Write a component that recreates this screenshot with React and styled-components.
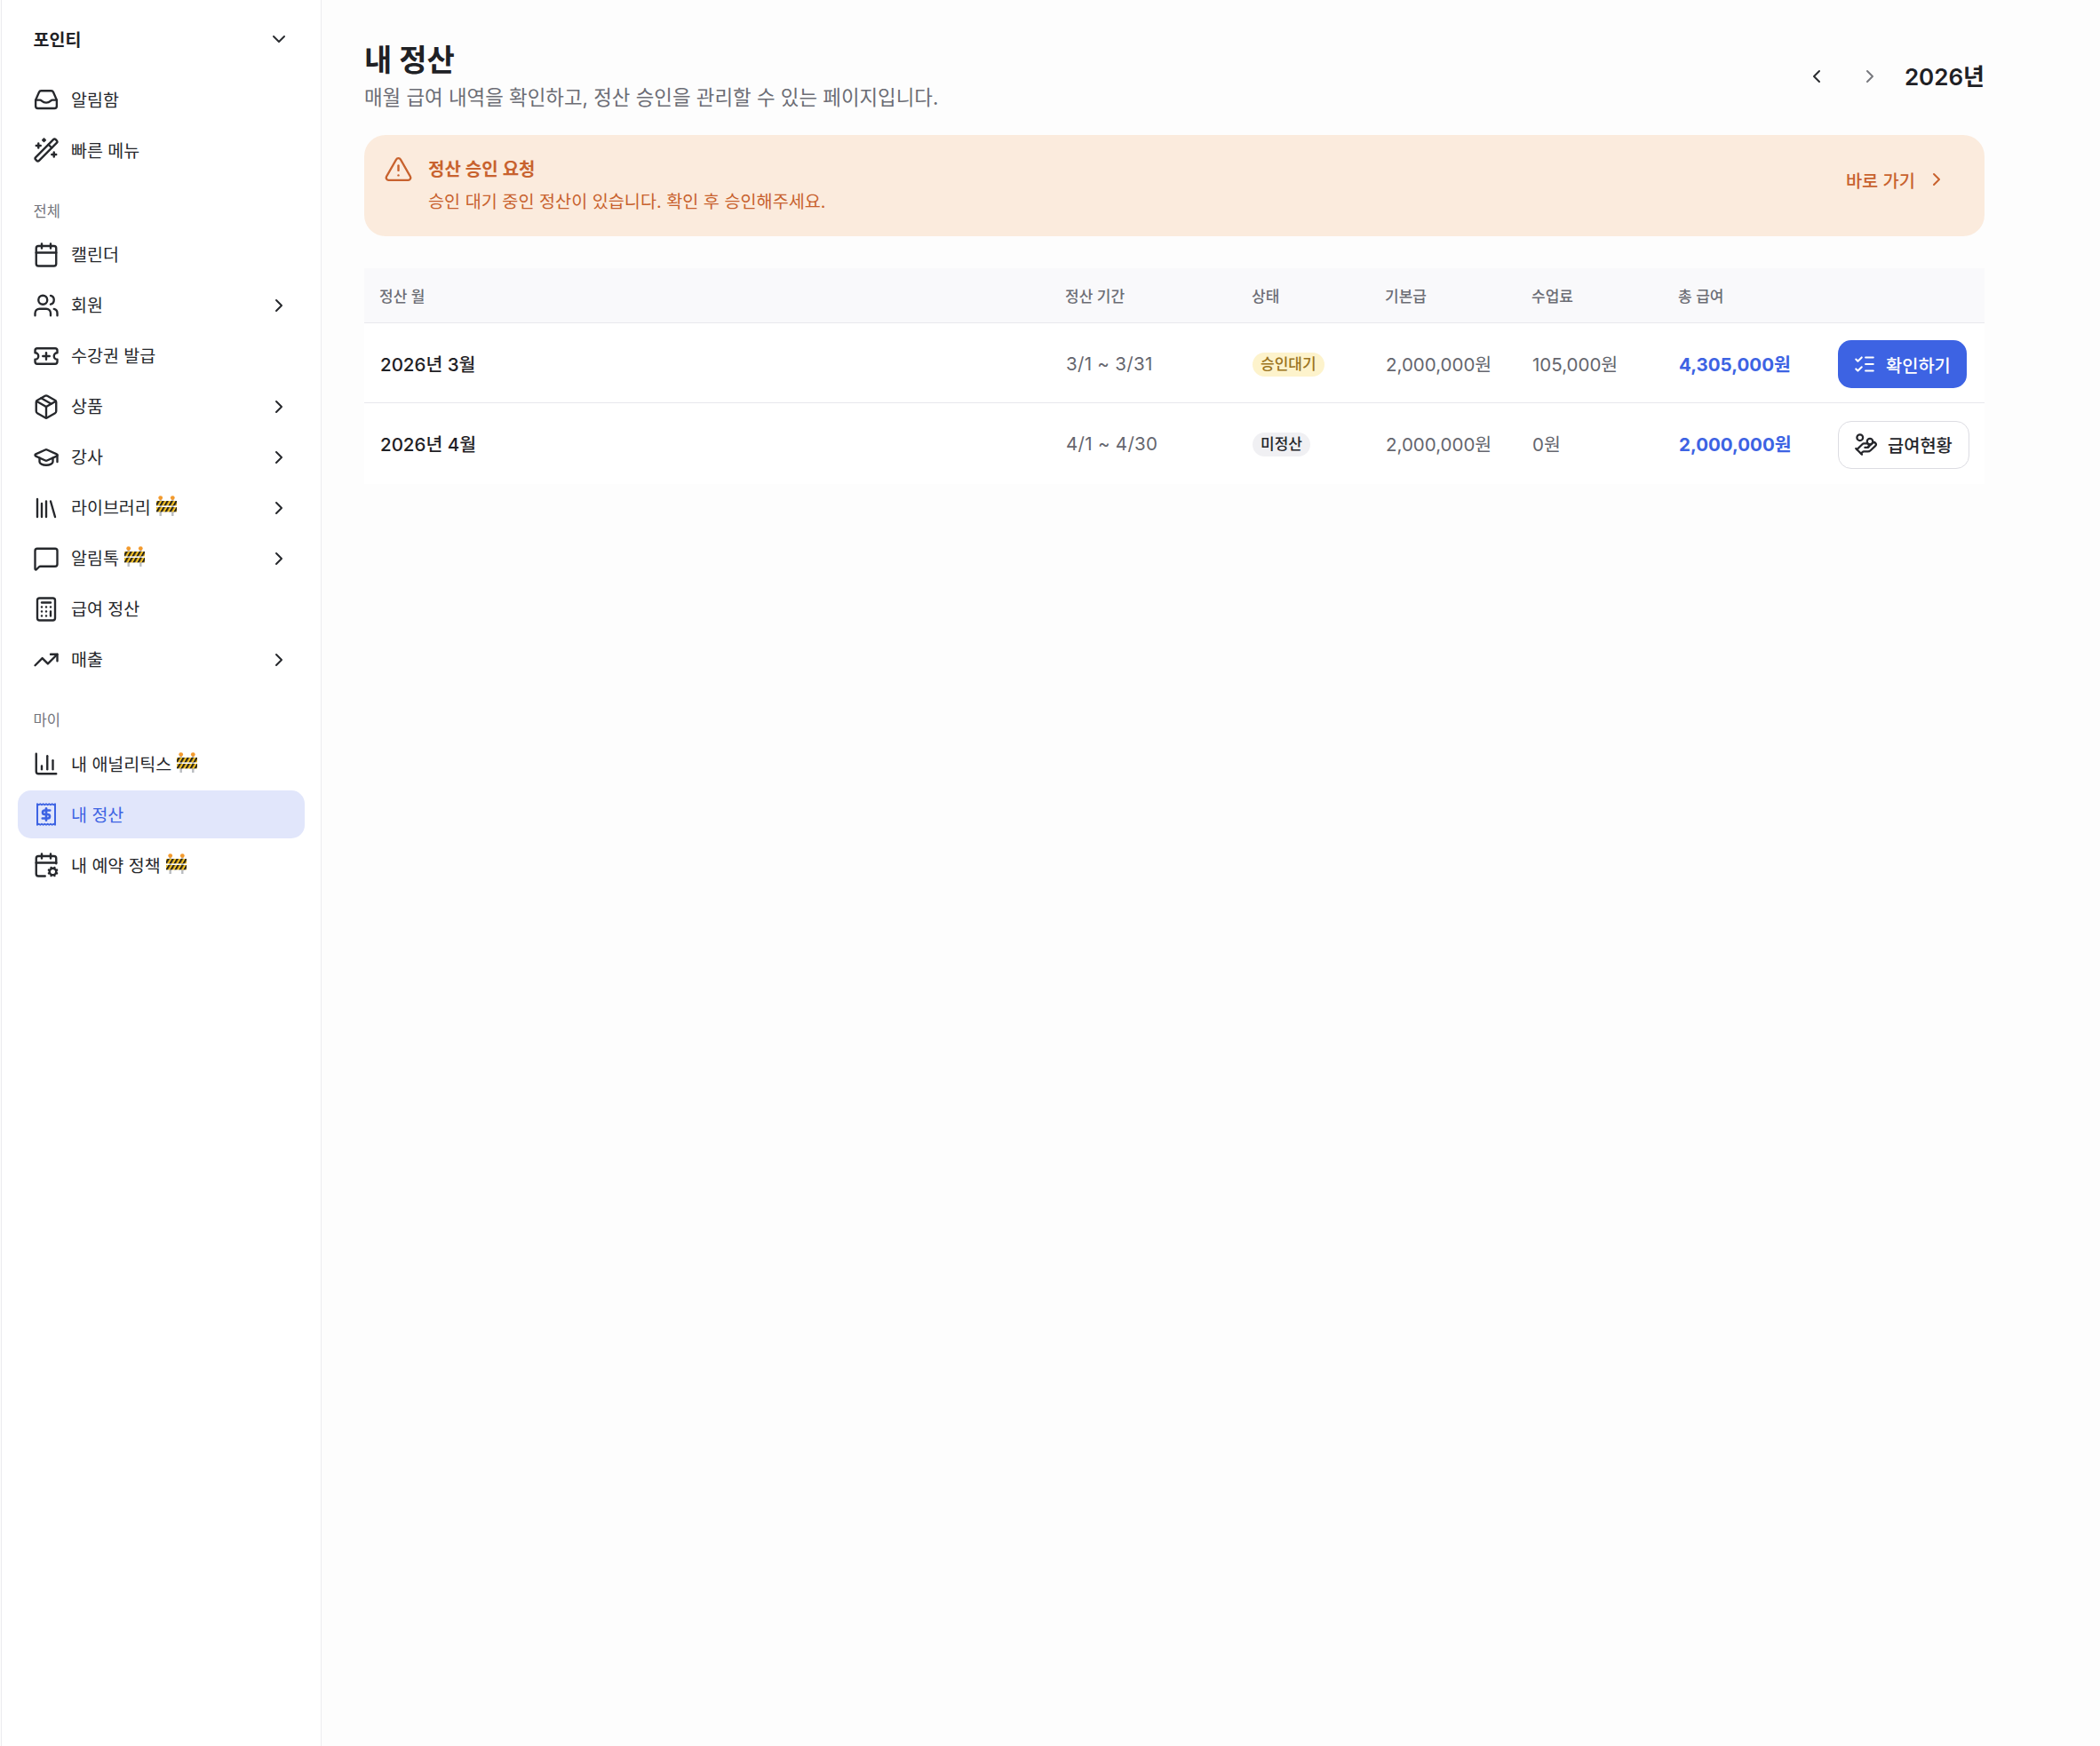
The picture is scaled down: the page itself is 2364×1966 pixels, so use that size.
import React from "react";
import styled, { createGlobalStyle } from "styled-components";
import {
  Calculator,
  Calendar,
  CalendarCog,
  ChartColumn,
  ChevronDown,
  ChevronLeft,
  ChevronRight,
  GraduationCap,
  HandCoins,
  Library,
  ListChecks,
  MessageSquare,
  Package,
  TicketPlus,
  TrendingUp,
  TriangleAlert,
  Users,
  WandSparkles,
} from "lucide-react";

const InboxIcon = (props) => (
  <svg width="30" height="30" viewBox="0 0 24 24" fill="none" stroke="currentColor" strokeWidth="1.9" strokeLinecap="round" strokeLinejoin="round" {...props}>
    <path d="M2.5 12.5 5.6 5.4A2 2 0 0 1 7.4 4.2h9.2a2 2 0 0 1 1.8 1.2l3.1 7.1V18a2 2 0 0 1-2 2h-15a2 2 0 0 1-2-2z" />
    <path d="M2.5 12.5h4c1.5 0 1.8 2.4 5.5 2.4s4-2.4 5.5-2.4h4" />
  </svg>
);

const ReceiptIcon = (props) => (
  <svg width="30" height="30" viewBox="0 0 24 24" fill="none" stroke="currentColor" strokeWidth="1.75" strokeLinejoin="round" {...props}>
    <path d="M4 2.6l1.33.8 1.33-.8 1.34.8 1.33-.8 1.34.8 1.33-.8 1.33.8 1.34-.8 1.33.8 1.33-.8 1.34.8 1.33-.8v18.8l-1.33-.8-1.33.8-1.34-.8-1.33.8-1.33-.8-1.34.8-1.33-.8-1.33.8-1.34-.8-1.33.8-1.33-.8-1.34.8z" strokeWidth="1.6" />
    <path d="M15.4 8.4H10.6a1.8 1.8 0 0 0 0 3.6h2.8a1.8 1.8 0 0 1 0 3.6H8.6" strokeWidth="2.1" strokeLinecap="round" />
    <path d="M12 6.6v10.8" strokeWidth="2.1" strokeLinecap="round" />
  </svg>
);

// 공사중 표지판
const Barrier = () => (
  <BarrierSvg viewBox="0 0 23 23">
    <defs>
      <pattern id="hazard" width="5" height="5" patternUnits="userSpaceOnUse" patternTransform="skewX(-30)">
        <rect width="5" height="5" fill="#f7c325" />
        <rect width="2.5" height="5" fill="#26231d" />
      </pattern>
    </defs>
    <rect x="3.5" y="3" width="2.4" height="20" fill="#b9bcc0" />
    <rect x="17.1" y="3" width="2.4" height="20" fill="#b9bcc0" />
    <circle cx="4.7" cy="2.6" r="2.4" fill="#f39a2d" />
    <circle cx="18.3" cy="2.6" r="2.4" fill="#f39a2d" />
    <rect x="0" y="6" width="23" height="5.4" fill="url(#hazard)" />
    <rect x="0" y="13" width="23" height="5.4" fill="url(#hazard)" />
  </BarrierSvg>
);

const topItems = [
  { label: "알림함", icon: InboxIcon },
  { label: "빠른 메뉴", icon: WandSparkles },
];

const allItems = [
  { label: "캘린더", icon: Calendar },
  { label: "회원", icon: Users, more: true },
  { label: "수강권 발급", icon: TicketPlus },
  { label: "상품", icon: Package, more: true },
  { label: "강사", icon: GraduationCap, more: true },
  { label: "라이브러리", icon: Library, more: true, wip: true },
  { label: "알림톡", icon: MessageSquare, more: true, wip: true },
  { label: "급여 정산", icon: Calculator },
  { label: "매출", icon: TrendingUp, more: true },
];

const myItems = [
  { label: "내 애널리틱스", icon: ChartColumn, wip: true },
  { label: "내 정산", icon: ReceiptIcon, active: true },
  { label: "내 예약 정책", icon: CalendarCog, wip: true },
];

const rows = [
  {
    month: "2026년 3월",
    period: "3/1 ~ 3/31",
    status: "승인대기",
    pending: true,
    base: "2,000,000원",
    fee: "105,000원",
    total: "4,305,000원",
  },
  {
    month: "2026년 4월",
    period: "4/1 ~ 4/30",
    status: "미정산",
    base: "2,000,000원",
    fee: "0원",
    total: "2,000,000원",
  },
];

const NavList = ({ items }) => (
  <Nav>
    {items.map(({ label, icon: Icon, more, wip, active }) => (
      <NavItem key={label} $active={active}>
        <Icon size={30} strokeWidth={1.9} />
        <NavLabel>
          {label}
          {wip && <Barrier />}
        </NavLabel>
        {more && <ChevronRight size={24} strokeWidth={2} />}
      </NavItem>
    ))}
  </Nav>
);

export default function App() {
  return (
    <Shell>
      <GlobalStyle />
      <Sidebar>
        <Brand>
          <BrandName>포인티</BrandName>
          <ChevronDown size={24} strokeWidth={2} />
        </Brand>
        <NavList items={topItems} />
        <SectionLabel>전체</SectionLabel>
        <NavList items={allItems} />
        <SectionLabel>마이</SectionLabel>
        <NavList items={myItems} />
      </Sidebar>
      <Main>
        <Header>
          <div>
            <Title>내 정산</Title>
            <Subtitle>매월 급여 내역을 확인하고, 정산 승인을 관리할 수 있는 페이지입니다.</Subtitle>
          </div>
          <YearPicker>
            <YearArrow>
              <ChevronLeft size={24} strokeWidth={2} />
            </YearArrow>
            <YearArrow $muted>
              <ChevronRight size={24} strokeWidth={2} />
            </YearArrow>
            <Year>2026년</Year>
          </YearPicker>
        </Header>

        <Banner>
          <BannerIcon>
            <TriangleAlert size={33} strokeWidth={1.75} />
          </BannerIcon>
          <BannerText>
            <BannerTitle>정산 승인 요청</BannerTitle>
            <BannerBody>승인 대기 중인 정산이 있습니다. 확인 후 승인해주세요.</BannerBody>
          </BannerText>
          <BannerLink>
            바로 가기
            <ChevronRight size={24} strokeWidth={2} />
          </BannerLink>
        </Banner>

        <Table>
          <HeadRow>
            <HeadCell>정산 월</HeadCell>
            <HeadCell>정산 기간</HeadCell>
            <HeadCell>상태</HeadCell>
            <HeadCell>기본급</HeadCell>
            <HeadCell>수업료</HeadCell>
            <HeadCell>총 급여</HeadCell>
            <HeadCell />
          </HeadRow>
          {rows.map((row) => (
            <Row key={row.month}>
              <Month>{row.month}</Month>
              <Period>{row.period}</Period>
              <div>
                <Badge $pending={row.pending}>{row.status}</Badge>
              </div>
              <Cell>{row.base}</Cell>
              <Cell>{row.fee}</Cell>
              <Total>{row.total}</Total>
              <ActionCell>
                {row.pending ? (
                  <PrimaryButton>
                    <ListChecks size={26} strokeWidth={1.9} />
                    확인하기
                  </PrimaryButton>
                ) : (
                  <OutlineButton>
                    <HandCoins size={27} strokeWidth={2} />
                    급여현황
                  </OutlineButton>
                )}
              </ActionCell>
            </Row>
          ))}
        </Table>
      </Main>
    </Shell>
  );
}

const GlobalStyle = createGlobalStyle`
  html, body {
    margin: 0;
    padding: 0;
    background: #fdfdfd;
  }
  body {
    font-family: Inter, "Noto Sans CJK KR", "Noto Sans", sans-serif;
    color: #1f2125;
  }
  * {
    box-sizing: border-box;
  }
`;

const Shell = styled("div")`
  display: flex;
  min-height: 1966px;
  padding-left: 1px;
  background: #fdfdfd;
`;

const Sidebar = styled("aside")`
  flex: 0 0 361px;
  padding: 16px 18px 0 18px;
  background: #fff;
  border-left: 1px solid #ececef;
  border-right: 1.5px solid #ececef;
`;

const Brand = styled("div")`
  display: flex;
  align-items: center;
  justify-content: space-between;
  height: 54px;
  margin-bottom: 15px;
  padding: 0 17px 0 17.5px;
  color: #2b2d31;
  svg {
    margin-top: 1px;
  }
`;

const BrandName = styled("span")`
  font-size: 19.5px;
  font-weight: 600;
  color: #1f2125;
`;

const Nav = styled("nav")`
  display: flex;
  flex-direction: column;
  gap: 3px;
`;

const NavItem = styled("div")`
  display: flex;
  align-items: center;
  gap: 13.5px;
  height: 54px;
  padding: 0 17px 0 16.5px;
  border-radius: 15px;
  font-size: 19.5px;
  color: ${(p) => (p.$active ? "#3d63e3" : "#26282c")};
  background: ${(p) => (p.$active ? "#e1e6fb" : "transparent")};
  svg {
    flex: none;
  }
`;

const NavLabel = styled("span")`
  display: flex;
  flex: 1;
  align-items: center;
  gap: 6px;
  padding-bottom: 2px;
`;

const BarrierSvg = styled("svg")`
  width: 23px;
  height: 23px;
  margin-top: -2px;
`;

const SectionLabel = styled("div")`
  height: 24px;
  margin: 29.5px 0 10px;
  padding-left: 17.5px;
  font-size: 16.5px;
  line-height: 24px;
  color: #74757c;
`;

const Main = styled("main")`
  flex: 1;
  padding: 44px 130px 0 48px;
`;

const Header = styled("header")`
  display: flex;
  align-items: center;
  justify-content: space-between;
`;

const Title = styled("h1")`
  margin: 0 0 1px;
  padding-top: 1px;
  font-size: 34px;
  font-weight: 700;
  line-height: 46px;
  color: #1f2125;
`;

const Subtitle = styled("p")`
  margin: 0;
  font-size: 22.4px;
  line-height: 36px;
  color: #6c6d75;
`;

const YearPicker = styled("div")`
  display: flex;
  align-items: center;
`;

const YearArrow = styled("span")`
  display: flex;
  justify-content: center;
  width: 60px;
  color: ${(p) => (p.$muted ? "#77787e" : "#2b2d31")};
`;

const Year = styled("span")`
  margin: -4px 0 0 9px;
  font-size: 26px;
  font-weight: 600;
  color: #1f2125;
`;

const Banner = styled("section")`
  display: flex;
  align-items: center;
  height: 114px;
  margin-top: 24px;
  padding: 0 42px 0 22px;
  border-radius: 24px;
  background: #fbebdd;
  color: #c8622e;
`;

const BannerIcon = styled("span")`
  display: flex;
  align-self: flex-start;
  margin-top: 22px;
`;

const BannerText = styled("div")`
  flex: 1;
  margin-left: 17px;
`;

const BannerTitle = styled("div")`
  margin-bottom: 6px;
  font-size: 20px;
  font-weight: 600;
  line-height: 30px;
`;

const BannerBody = styled("div")`
  font-size: 19.65px;
  line-height: 30px;
`;

const BannerLink = styled("a")`
  display: flex;
  align-items: center;
  gap: 12px;
  margin-bottom: 14px;
  font-size: 19.8px;
  font-weight: 500;
`;

const Table = styled("div")`
  margin-top: 36px;
  padding-bottom: 1px;
  background: #fff;
`;

const columns = "772px 210px 150px 165px 165px 180px 182px";

const HeadRow = styled("div")`
  display: grid;
  grid-template-columns: ${columns};
  align-items: center;
  height: 62px;
  background: #f9f9fb;
  border-bottom: 1.5px solid #e8e8ed;
`;

const HeadCell = styled("div")`
  padding-left: 17px;
  font-size: 17px;
  font-weight: 500;
  color: #6c6d75;
`;

const Row = styled("div")`
  display: grid;
  grid-template-columns: ${columns};
  align-items: center;
  height: 90px;
  border-bottom: 1.5px solid #e8e8ed;
  &:last-child {
    border-bottom: 0;
  }
  > div {
    padding-left: 18px;
  }
`;

const Month = styled("div")`
  font-size: 20.5px;
  font-weight: 500;
  color: #1f2125;
`;

const Cell = styled("div")`
  font-size: 20.5px;
  color: #65666e;
`;

const Period = styled(Cell)`
  margin-top: 1px;
  letter-spacing: 0.3px;
`;

const Total = styled("div")`
  font-size: 20.5px;
  font-weight: 700;
  color: #3d63e3;
`;

const Badge = styled("span")`
  display: inline-block;
  height: 27px;
  margin-top: 3px;
  padding: 0 9px;
  border-radius: 14px;
  font-size: 17px;
  font-weight: 500;
  line-height: 27px;
  color: ${(p) => (p.$pending ? "#9b7420" : "#25262b")};
  background: ${(p) => (p.$pending ? "#fdf3cc" : "#f0f0f3")};
`;

const ActionCell = styled("div")`
  && {
    padding-left: 17px;
  }
  margin-top: 3px;
`;

const PrimaryButton = styled("button")`
  display: inline-flex;
  align-items: center;
  gap: 11.5px;
  height: 54px;
  padding: 0 18px 0 16.5px;
  border: 0;
  border-radius: 15px;
  font-family: inherit;
  font-size: 19.8px;
  font-weight: 500;
  color: #fff;
  background: #3d63e3;
`;

const OutlineButton = styled(PrimaryButton)`
  border: 1.5px solid #dcdce2;
  color: #25262b;
  background: #fff;
`;
